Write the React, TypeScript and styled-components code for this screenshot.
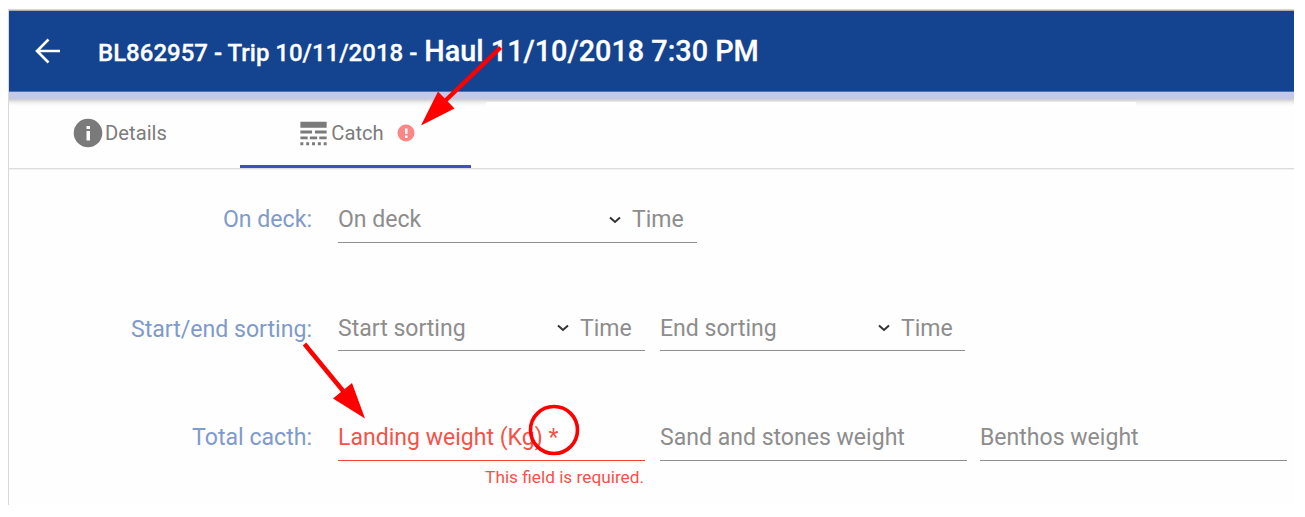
import React from 'react';
import styled, { createGlobalStyle } from 'styled-components';

const GlobalStyle = createGlobalStyle`
  * { box-sizing: border-box; }
  body {
    margin: 0;
    background: #fff;
    font-family: Roboto, 'Liberation Sans', sans-serif;
    overflow: hidden;
  }
`;

const Screen = styled.div`
  position: relative;
  width: 1305px;
  height: 517px;
  padding: 9px 11px 0 8px;
  background: #fff;
`;

const Panel = styled.main`
  height: 496px;
  border-left: 1px solid #d9d9d9;
  border-top: 1px solid #d8d8d8;
  background: #fefefe;
`;

const Header = styled.header`
  display: flex;
  align-items: center;
  height: 82px;
  padding-left: 24px;
  border-top: 1px solid #a9abb0;
  border-bottom: 1px solid #4a73b5;
  background: #144390;
  color: #fff;
`;

const BackIcon = styled.svg`
  width: 30px;
  height: 30px;
  margin-right: 35px;
`;

const Title = styled.h1`
  display: flex;
  align-items: baseline;
  gap: 7px;
  margin: 0;
  padding-top: 1px;
  white-space: pre;
`;

const TitlePart = styled.span<{ $size: number }>`
  font-size: ${p => p.$size}px;
  font-weight: 500;
  line-height: 34px;
  -webkit-text-stroke: 0.3px #fff;
`;

const Progress = styled.div`
  height: 7px;
  background: #c5c9e8;
`;

const ShadowStrip = styled.div`
  display: grid;
  grid-template-columns: 477px 650px 1fr;
  height: 7px;
  background: linear-gradient(#cdcdd0, #dedede 2px, #ececec 3px, #f7f7f7 5px, #fefefe);
`;

const ShadowCover = styled.div`
  grid-column: 2;
  margin-top: 3px;
  background: #fff;
`;

const Tabs = styled.nav`
  display: flex;
  height: 64px;
  border-bottom: 1px solid #f2f2f2;
  box-shadow: inset 0 -1px 0 #dcdcdc;
`;

const Tab = styled.div<{ $active?: boolean }>`
  display: flex;
  align-items: center;
  justify-content: center;
  width: 231px;
  height: 62px;
  padding-bottom: ${p => (p.$active ? 5 : 8)}px;
  padding-right: ${p => (p.$active ? 0 : 9)}px;
  border-bottom: ${p => (p.$active ? '3px solid #3f51b5' : '0')};
  color: #7c7c7c;
  font-size: 20.2px;
`;

const TabIcon = styled.svg<{ $size?: number }>`
  width: ${p => p.$size ?? 30}px;
  height: ${p => p.$size ?? 30}px;
  margin-right: ${p => (p.$size ? 0 : 2)}px;
`;

const ErrorIcon = styled.svg`
  width: 18px;
  height: 18px;
  margin-left: 13px;
`;

const Form = styled.form`
  padding-top: 20px;
`;

const Row = styled.div`
  display: flex;
  height: 109px;
`;

const RowLabel = styled.div<{ $drop?: number }>`
  width: 303px;
  margin-right: 26px;
  padding-top: ${p => p.$drop ?? 0}px;
  color: #7f9acb;
  font-size: 23.1px;
  line-height: 60px;
  text-align: right;
`;

const Field = styled.div<{ $width: number; $gap?: number }>`
  width: ${p => p.$width}px;
  margin-right: ${p => p.$gap ?? 15}px;
`;

const Control = styled.div<{ $error?: boolean; $height?: number }>`
  display: flex;
  align-items: center;
  height: ${p => p.$height ?? 53}px;
  border-bottom: 1px solid ${p => (p.$error ? '#f44336' : '#8f8f8f')};
  color: ${p => (p.$error ? '#f4524a' : '#8d8d8d')};
  font-size: 23.05px;
  line-height: 45px;
  white-space: pre;
`;

const ControlText = styled.span`
  flex: 1;
  padding-top: 7px;
`;

const TimeText = styled.span<{ $width: number }>`
  width: ${p => p.$width}px;
  padding-top: 7px;
`;

const Chevron = styled.svg`
  width: 12px;
  height: 8px;
  margin: 7px 11px 0 0;
`;

const ErrorText = styled.div`
  padding: 6px 1px 0 0;
  color: #f4524a;
  font-size: 17.25px;
  line-height: 21px;
  text-align: right;
`;

const Annotations = styled.svg`
  position: absolute;
  inset: 0;
  pointer-events: none;
`;

function DateControl({ label, height, timeWidth = 65 }: { label: string; height?: number; timeWidth?: number }) {
  return (
    <Control $height={height}>
      <ControlText>{label}</ControlText>
      <Chevron viewBox="0 0 12 8" fill="none" stroke="#333" strokeWidth="2">
        <path d="M1 1.5 6 6l5-4.5" />
      </Chevron>
      <TimeText $width={timeWidth}>Time</TimeText>
    </Control>
  );
}

export default function App() {
  return (
    <>
      <GlobalStyle />
      <Screen>
        <Panel>
          <Header>
            <BackIcon viewBox="0 0 30 30" fill="none" stroke="#fff" strokeWidth="2.6">
              <path d="M27 15H4.5M15.500 3.500 4 15l11.500 11.500" />
            </BackIcon>
            <Title>
              <TitlePart $size={24}>BL862957 - Trip 10/11/2018 -</TitlePart>
              <TitlePart $size={28.8}>Haul 11/10/2018 7:30 PM</TitlePart>
            </Title>
          </Header>
          <Progress />
          <ShadowStrip><ShadowCover /></ShadowStrip>
          <Tabs>
            <Tab>
              <TabIcon viewBox="0 0 30 30">
                <circle cx="15" cy="15" r="14.300" fill="#7a7a7a" />
                <path d="M13.500 8h3.500v3h-3.500zM13.500 13h3.500v9.500h-3.500z" fill="#fff" />
              </TabIcon>
              Details
            </Tab>
            <Tab $active>
              <TabIcon $size={35} viewBox="0 0 24 24" fill="#7a7a7a">
                <path d="M3 16h5v-2H3v2zm6.500 0h5v-2h-5v2zm6.500 0h5v-2h-5v2zM3 20h2v-2H3v2zm4 0h2v-2H7v2zm4 0h2v-2h-2v2zm4 0h2v-2h-2v2zm4 0h2v-2h-2v2zM3 12h8v-2H3v2zm10 0h8v-2h-8v2zM3 4v4h18V4H3z" />
              </TabIcon>
              Catch
              <ErrorIcon viewBox="0 0 18 18">
                <circle cx="9" cy="9" r="8.500" fill="#fb8684" />
                <path d="M8 4.500h2.500v5.500H8zM8 11.500h2.500V14H8z" fill="#fff" />
              </ErrorIcon>
            </Tab>
          </Tabs>
          <Form>
            <Row>
              <RowLabel>On deck:</RowLabel>
              <Field $width={359}><DateControl label="On deck" /></Field>
            </Row>
            <Row>
              <RowLabel $drop={1}>Start/end sorting:</RowLabel>
              <Field $width={307}><DateControl label="Start sorting" height={52} /></Field>
              <Field $width={305}><DateControl label="End sorting" height={52} timeWidth={64} /></Field>
            </Row>
            <Row>
              <RowLabel>Total cacth:</RowLabel>
              <Field $width={307}>
                <Control $error><ControlText>Landing weight (Kg) *</ControlText></Control>
                <ErrorText>This field is required.</ErrorText>
              </Field>
              <Field $width={307} $gap={13}>
                <Control><ControlText>Sand and stones weight</ControlText></Control>
              </Field>
              <Field $width={307} $gap={0}>
                <Control><ControlText>Benthos weight</ControlText></Control>
              </Field>
            </Row>
          </Form>
        </Panel>
        <Annotations width="1305" height="517" viewBox="0 0 1305 517" fill="none">
          <g stroke="#f00" strokeWidth="4.500">
            <path d="M500.500 47.500 445 101" />
            <path d="M304.500 344 344 392" />
            <circle cx="554" cy="430" r="23.500" strokeWidth="3.600" />
          </g>
          <path d="M421 125.500 438 91.500 454.500 108.500zM365 418.500 333 398.500 352 383z" fill="#f00" />
        </Annotations>
      </Screen>
    </>
  );
}
